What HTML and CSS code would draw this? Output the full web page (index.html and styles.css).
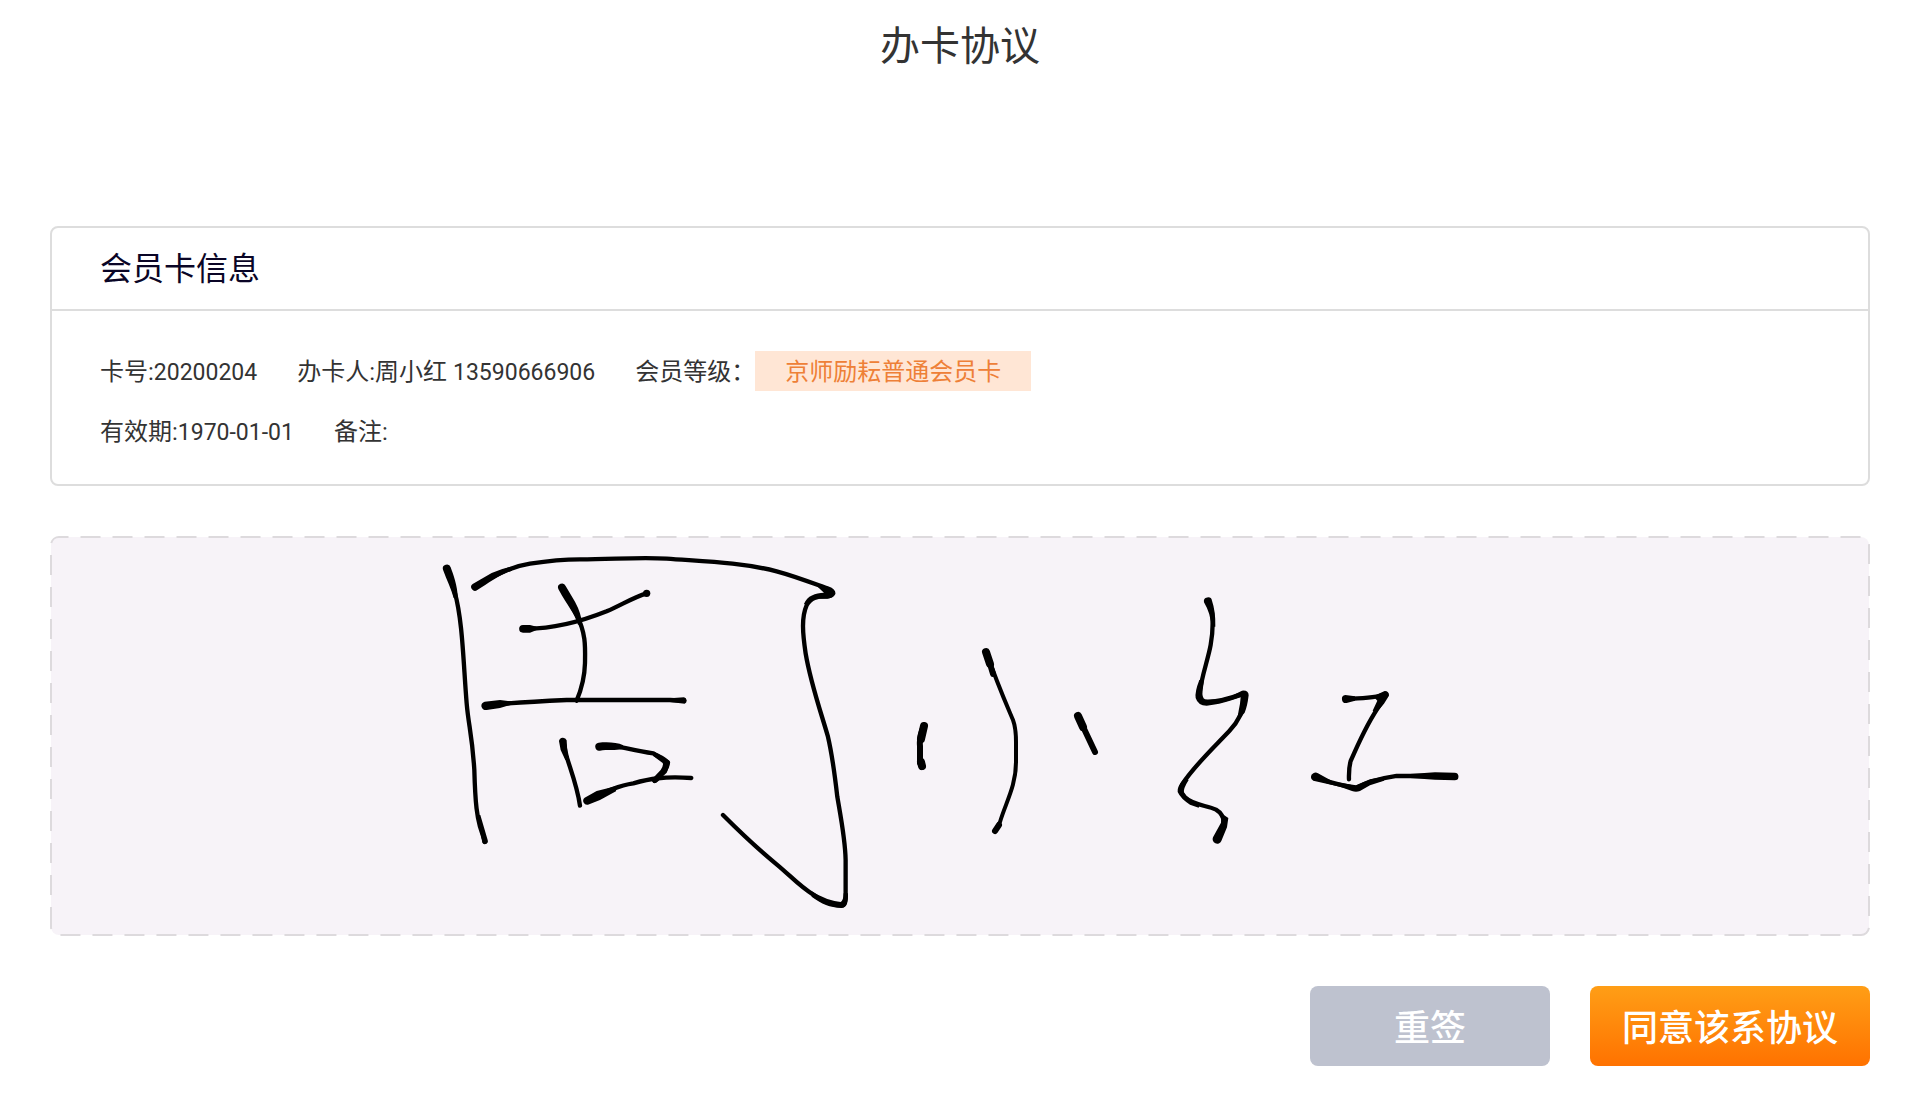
FILE: index.html
```html
<!DOCTYPE html>
<html lang="zh-CN">
<head>
  <meta charset="UTF-8">
  <title>办卡协议</title>
  <link rel="stylesheet" href="styles.css">
</head>
<body>

  <h1 class="page-title">办卡协议</h1>

  <div class="container">
    <div class="card">
      <h2 class="card-title">会员卡信息</h2>
      <div class="card-body">
        <div class="row">
          <span>卡号:<span class="num">20200204</span></span>
          <span>办卡人:周小红 <span class="num">13590666906</span></span>
          <span class="level">会员等级：<span class="tag">京师励耘普通会员卡</span></span>
        </div>
        <div class="row">
          <span>有效期:<span class="num">1970-01-01</span></span>
          <span>备注:</span>
        </div>
      </div>
    </div>

    <svg class="sign-pad" viewBox="0 0 1820 400">
      <rect class="pad-bg" x="1" y="1" width="1818" height="398" rx="8"/>
      <path class="pad-border" d="M1 391V9A8 8 0 0 1 9 1H1811A8 8 0 0 1 1819 9V391A8 8 0 0 1 1811 399H9A8 8 0 0 1 1 391"/>

      <!-- 周 -->
      <g class="ink" transform="translate(370 -6) scale(0.3333)">
        <path class="thin" d="M80 116L104 186C128 270 130 400 140 520C146 590 156 610 163 720C166 830 172 860 180 890L195 936"/>
        <path class="taper" d="M69 119A12 12 0 0 1 92 112C100 134 112 165 114 205L101 204C94 176 80 150 69 119Z"/>
        <path class="taper" d="M172 855L181 855L203 930A9 9 0 0 1 187 938Z"/>
        <path class="thin" d="M166 168C210 146 260 112 330 101C400 90 440 88 480 88C580 88 660 81 740 86C840 94 960 96 1070 124C1130 140 1190 164 1224 176Q1240 182 1240 190Q1236 198 1222 199C1190 198 1172 204 1160 226C1144 262 1148 310 1157 370C1172 460 1204 550 1224 620C1238 680 1244 730 1252 800C1264 870 1276 930 1277 990V1090Q1278 1126 1266 1126C1240 1126 1210 1116 1180 1094C1140 1070 1110 1036 1070 1003C1010 954 960 906 909 855"/>
        <path class="taper" d="M158 162L215 129Q245 115 275 110L276 122C240 134 205 160 172 180A11 11 0 0 1 158 162Z"/>
        <path class="taper" d="M1180 158L1226 171Q1246 180 1244 192Q1238 206 1222 206L1185 206Q1172 210 1165 226L1152 222C1162 196 1186 190 1212 188Z"/>
        <path class="taper" d="M1175 1084Q1220 1112 1262 1116Q1270 1114 1271 1090H1284C1285 1115 1282 1134 1264 1134C1230 1132 1205 1122 1175 1100Z"/>
        <path class="thin" d="M426 174L470 255C498 310 496 350 495 400C494 440 486 474 470 512"/>
        <path class="taper" d="M415 177A11 11 0 0 1 437 168L465 215Q484 250 487 284L474 284C464 250 444 230 415 177Z"/>
        <path class="thin" d="M312 296C400 298 480 276 560 244C610 222 640 202 680 190"/>
        <path class="taper" d="M309 285H330L350 290V300L330 308H309A11 11 0 0 1 309 285Z"/>
        <circle class="taper" cx="680" cy="190" r="11"/>
        <path class="thin" d="M197 527C270 518 350 514 440 510H750L792 512"/>
        <path class="taper" d="M194 515L240 510L275 514V524L240 534L200 540A12 12 0 0 1 194 515ZM750 505L792 502A10 10 0 0 1 794 521L750 516Z"/>
        <path class="thin" d="M430 633L440 680C452 720 472 770 480 827"/>
        <path class="taper" d="M417 633A12 12 0 0 1 440 631L442 665L448 690L436 690L422 660Z"/>
        <path class="thin" d="M538 649H590C620 654 650 664 700 670L744 698L735 724L704 753"/>
        <path class="taper" d="M536 638C560 636 590 636 610 646L606 657C590 662 560 658 540 662A12 12 0 0 1 536 638ZM700 665Q730 675 748 692Q753 704 742 722L725 740Q710 764 700 758Q690 750 705 738L722 720Q732 705 728 699L700 678Z"/>
        <path class="thin" d="M500 812C550 786 600 766 640 760C690 746 730 739 814 744"/>
        <path class="taper" d="M494 803L530 783L590 768L588 784L540 810L504 824A12 12 0 0 1 494 803Z"/>
      </g>

      <!-- 小 -->
      <g class="ink">
        <path class="soft" d="M874 190Q869 200 870 210V227L872 231"/>
        <path class="medium" d="M874 190L871 203M871 226L872 230"/>
        <path class="pen" d="M936 115C948 150 958 172 963 184Q966 192 966 206V226C966 250 956 266 950 286L945 295"/>
        <path class="medium" d="M936 116L940 128"/>
        <path class="soft" d="M940 128L943 138M949 289L945 295"/>
        <path class="soft" d="M1028 180L1045 216"/>
        <path class="medium" d="M1028 180L1033 191"/>
      </g>

      <!-- 红 -->
      <g class="ink" transform="translate(1090 44) scale(0.3333)">
        <path class="thin" d="M205 66C222 90 220 150 212 195C204 240 184 290 178 345Q177 366 198 367C240 366 280 352 310 341Q318 340 316 352C312 390 296 424 268 453C216 508 160 560 126 614Q116 634 135 652C160 676 200 676 228 689Q250 702 253 730L234 776"/>
        <path class="taper" d="M192 67A12 12 0 0 1 216 62Q227 94 226 140H213Q214 104 192 67Z"/>
        <path class="taper" d="M178 300Q164 336 167 354Q174 377 200 377Q240 372 270 362V350Q230 361 195 358Q185 354 188 330L192 300Z"/>
        <path class="taper" d="M270 350L306 332Q326 330 326 346Q322 380 314 398L290 426L296 392Q301 370 302 352L270 362Z"/>
        <path class="taper" d="M134 594Q110 620 113 636Q122 656 150 674L176 683L180 672Q146 660 132 640Q128 628 146 600Z"/>
        <path class="taper" d="M244 700L265 714L261 742L244 783A13 13 0 0 1 219 772L243 728Z"/>
        <path class="thin" d="M616 357C660 355 705 355 737 343L722 372C680 430 656 490 632 543Q626 564 627 598"/>
        <path class="taper" d="M616 345L645 349V362L620 369A12 12 0 0 1 616 345ZM700 349L734 333A12 12 0 0 1 747 347L732 371L708 398L698 392L712 362Z"/>
        <path class="thin" d="M525 590C570 610 610 616 648 624C690 602 730 594 770 588H944"/>
        <path class="taper" d="M520 580A12 12 0 0 1 534 580L580 605L648 616L690 598L732 590V602L690 616L660 633Q648 638 636 633L600 620L520 602A12 12 0 0 1 520 580Z"/>
        <path class="taper" d="M800 583L885 577L944 578A10 10 0 0 1 944 601L885 599L800 593Z"/>
      </g>
    </svg>

    <div class="actions">
      <button type="button" class="btn btn-reset">重签</button>
      <button type="button" class="btn btn-agree">同意该系协议</button>
    </div>
  </div>

</body>
</html>
```
FILE: styles.css
```css
body {
  margin: 0;
  background: #fff;
  color: #333;
  font-family: Roboto, "Noto Sans CJK SC", sans-serif;
}

.page-title {
  margin: 0;
  font-size: 40px;
  font-weight: 400;
  line-height: 94px;
  text-align: center;
}

.container {
  margin: 132px 50px 50px;
}

.card {
  border: 2px solid #ddd;
  border-radius: 8px;
}

.card-title {
  margin: 0;
  padding: 2px 48px 0;
  border-bottom: 2px solid #ddd;
  color: #0a0526;
  font-size: 32px;
  font-weight: 400;
  line-height: 79px;
}

.card-body {
  display: flex;
  flex-direction: column;
  gap: 18px;
  padding: 40px 48px 31px;
}

.row {
  display: flex;
  flex-wrap: wrap;
  gap: 40px;
  font-size: 24px;
  line-height: 42px;
}

.num {
  font-size: 23px;
  line-height: 1;
}

.level {
  display: flex;
}

.tag {
  height: 40px;
  padding: 0 30px;
  background: #ffe6d5;
  color: #ee8037;
}

.sign-pad {
  display: block;
  width: 100%;
  margin-top: 50px;
}

.pad-bg {
  fill: #f7f3f8;
}

.pad-border {
  fill: none;
  stroke: #dddadd;
  stroke-width: 2;
  stroke-dasharray: 20 12;
}

.ink path {
  fill: none;
  stroke: #000;
  stroke-linecap: round;
  stroke-linejoin: round;
}

.ink .thin {
  stroke-width: 13;
}

.ink .taper {
  fill: #000;
  stroke: none;
}

.ink .pen {
  stroke-width: 4;
}

.ink .soft {
  stroke-width: 6;
}

.ink .medium {
  stroke-width: 8;
}

.actions {
  display: flex;
  justify-content: flex-end;
  gap: 40px;
  margin-top: 50px;
}

.btn {
  width: 240px;
  height: 80px;
  padding: 0 0 2px;
  border: none;
  border-radius: 8px;
  color: #fff;
  font-family: inherit;
  font-size: 36px;
  font-weight: 500;
  cursor: pointer;
}

.btn-reset {
  background: #bec2cf;
}

.btn-agree {
  width: 280px;
  background: linear-gradient(#ff9e16, #ff7200);
}
```
